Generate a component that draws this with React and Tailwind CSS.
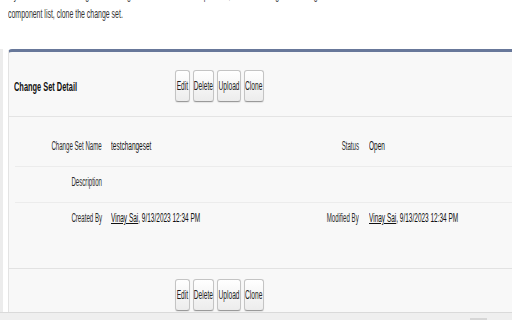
import React from "react";

const F = { fontFamily: '"Liberation Sans", Arial, sans-serif' };

function Btn({ w, children }) {
  return (
    <div
      className={`${w} h-[32px] flex items-center justify-center rounded-[3px] border border-[#c4c4c4] border-b-[#9a9a9a] bg-gradient-to-b from-[#ffffff] to-[#ececec] shadow-[0_1px_1px_rgba(0,0,0,0.08)]`}
    >
      <span className="inline-block whitespace-nowrap scale-x-[0.55] origin-center text-[12px] leading-[14px] text-[#222]">
        {children}
      </span>
    </div>
  );
}

function Buttons() {
  return (
    <div className="flex gap-[3px]">
      <Btn w="w-[15px]">Edit</Btn>
      <Btn w="w-[21px]">Delete</Btn>
      <Btn w="w-[24px]">Upload</Btn>
      <Btn w="w-[20px]">Clone</Btn>
    </div>
  );
}

function Label({ w, children }) {
  return (
    <div className={`${w} flex justify-end shrink-0`}>
      <span className="inline-block whitespace-nowrap scale-x-[0.51] origin-right text-[12px] leading-[14px] text-[#2a2a2a]">
        {children}
      </span>
    </div>
  );
}

function Value({ w, children }) {
  return (
    <div className={`${w} flex justify-start shrink-0`}>
      <span className="inline-block whitespace-nowrap scale-x-[0.54] origin-left text-[12px] leading-[14px] text-[#111]">
        {children}
      </span>
    </div>
  );
}

function Row({ h, border, children }) {
  return (
    <div className={`${h} ${border} flex items-start pt-[8px]`}>{children}</div>
  );
}

export default function App() {
  return (
    <div style={F} className="w-[512px] h-[320px] overflow-hidden bg-white relative">
      <div className="h-[64px] mt-[-15px] pl-[8px] text-[13px] leading-[19px] text-[#333]">
        <div className="whitespace-nowrap">
          <span className="inline-block scale-x-[0.535] origin-left">
            If you want to make changes to a change set after it has been uploaded, such as adding or removing items from its
          </span>
        </div>
        <div className="whitespace-nowrap">
          <span className="inline-block scale-x-[0.535] origin-left">
            component list, clone the change set.
          </span>
        </div>
      </div>

      <div className="flex">
        <div className="w-[3px] bg-[#ececec] shrink-0" />
        <div className="w-[5px] shrink-0" />
        <div className="w-[520px] shrink-0 bg-[#f8f8f8] border-t-[3px] border-t-[#68789a] border-l border-l-[#e3e3e3] rounded-tl-[4px]">
          <div className="h-[65px] flex items-center pt-[4px] pl-[5px] border-b border-b-[#e4e4e4]">
            <div className="w-[161px] shrink-0">
              <span className="inline-block whitespace-nowrap scale-x-[0.57] origin-left text-[13px] leading-[14px] font-bold text-[#111]">
                Change Set Detail
              </span>
            </div>
            <Buttons />
          </div>

          <div className="pt-[14px] border-b border-b-[#e2e2e2]">
            <div className="ml-[6px]">
              <Row h="h-[36px]" border="border-b border-b-[#ececec]">
                <Label w="w-[87px]">Change Set Name</Label>
                <div className="w-[9px] shrink-0" />
                <Value w="w-[151px]">testchangeset</Value>
                <Label w="w-[97px]">Status</Label>
                <div className="w-[10px] shrink-0" />
                <Value w="w-[150px]">Open</Value>
              </Row>
              <Row h="h-[36px]" border="border-b border-b-[#ececec]">
                <Label w="w-[87px]">Description</Label>
              </Row>
              <Row h="h-[65px]" border="">
                <Label w="w-[87px]">Created By</Label>
                <div className="w-[9px] shrink-0" />
                <Value w="w-[151px]">
                  <span className="underline">Vinay Sai</span>, 9/13/2023 12:34 PM
                </Value>
                <Label w="w-[97px]">Modified By</Label>
                <div className="w-[10px] shrink-0" />
                <Value w="w-[150px]">
                  <span className="underline">Vinay Sai</span>, 9/13/2023 12:34 PM
                </Value>
              </Row>
            </div>
          </div>

          <div className="pt-[10px] pl-[166px] h-[60px]">
            <Buttons />
          </div>
        </div>
      </div>

      <div className="absolute left-0 right-0 top-[312px] h-[8px] bg-[#efefef] border-t border-t-[#dadada]">
        <div className="absolute left-[470px] top-[5px] w-[17px] h-[3px] bg-[#d6d6d6]" />
      </div>
    </div>
  );
}
